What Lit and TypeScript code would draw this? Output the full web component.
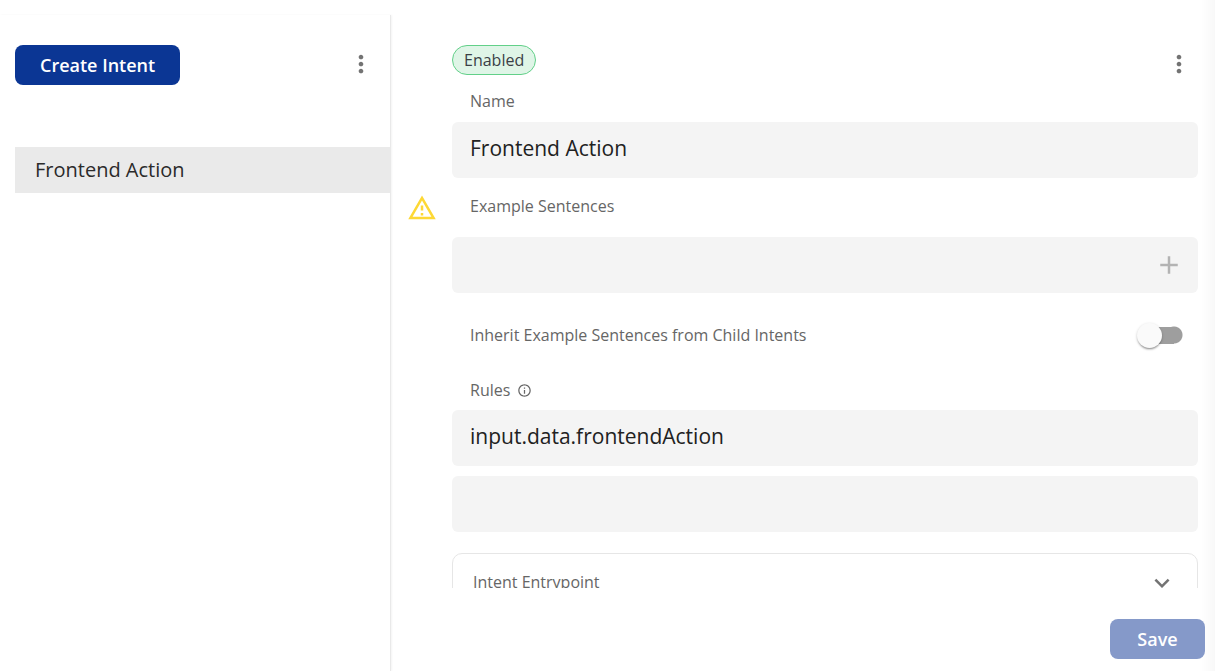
import { LitElement, html, css, svg } from "lit";
import { customElement, property, state } from "lit/decorators.js";

const dots = svg`<path fill="currentColor" d="M12 8c1.1 0 2-.9 2-2s-.9-2-2-2-2 .9-2 2 .9 2 2 2zm0 2c-1.1 0-2 .9-2 2s.9 2 2 2 2-.9 2-2-.9-2-2-2zm0 6c-1.1 0-2 .9-2 2s.9 2 2 2 2-.9 2-2-.9-2-2-2z"/>`;
const plus = svg`<path fill="currentColor" d="M19 13h-6v6h-2v-6H5v-2h6V5h2v6h6v2z"/>`;
const warning = svg`<path fill="currentColor" d="M12 5.99L19.53 19H4.47L12 5.99M12 2L1 21h22L12 2zm1 14h-2v2h2v-2zm0-6h-2v4h2v-4z"/>`;
const info = svg`<path fill="currentColor" d="M11 7h2v2h-2zm0 4h2v6h-2zm1-9C6.48 2 2 6.48 2 12s4.48 10 10 10 10-4.48 10-10S17.52 2 12 2zm0 18c-4.41 0-8-3.59-8-8s3.59-8 8-8 8 3.59 8 8-3.59 8-8 8z"/>`;
const chevron = svg`<path fill="currentColor" d="M7.41 8.59L12 13.17l4.59-4.58L18 10l-6 6-6-6 1.41-1.41z"/>`;

const icon = (shape: unknown, size: number) =>
  html`<svg viewBox="0 0 24 24" width=${size} height=${size} aria-hidden="true">${shape}</svg>`;

const controls = css`
  *, *::before { box-sizing: border-box; }
  svg { display: block; }
  button { font: inherit; border: 0; background: none; padding: 0; cursor: pointer; }
  .icon-button { display: grid; place-items: center; width: 38px; height: 38px; color: #737373; }
  .primary {
    height: 40px;
    min-width: 95px;
    border-radius: 8px;
    background: #0b3694;
    color: #fff;
    font-size: 18px;
    line-height: 24px;
    font-weight: 600;
    padding: 0 25px;
  }
  .primary:disabled { background: #8599c9; color: #fff; cursor: default; }
`;

@customElement("intent-list")
export class IntentList extends LitElement {
  @property({ attribute: false }) intents: string[] = [];

  static styles = [controls, css`
    :host { display: block; padding: 30px 0 0 15px; border-right: 1px solid #e9e9e9; box-shadow: 1px 0 2px #f4f4f4; }
    .bar { display: flex; justify-content: space-between; padding-right: 10px; margin-bottom: 62px; }
    .list { list-style: none; margin: 0; padding: 0; }
    .item {
      display: block;
      padding: 10px 20px;
      background: #eaeaea;
      color: #2b2b2b;
      font-size: 20px;
      line-height: 26px;
      text-decoration: none;
    }
  `];

  render() {
    return html`
      <div class="bar">
        <button class="primary">Create Intent</button>
        <button class="icon-button" aria-label="Intent list options">${icon(dots, 28)}</button>
      </div>
      <ul class="list">
        ${this.intents.map((name) => html`<li><a class="item" href="#intent">${name}</a></li>`)}
      </ul>
    `;
  }
}

@customElement("intent-editor")
export class IntentEditor extends LitElement {
  @state() private inherit = false;

  static styles = [controls, css`
    :host { display: flex; flex-direction: column; min-width: 0; min-height: 0; }
    .scroll { flex: 1; min-height: 0; overflow-y: auto; scrollbar-width: none; }
    .form {
      display: grid;
      grid-template-columns: 61px minmax(0, 1fr);
      padding: 30px 17px 20px 0;
    }
    .form > * { grid-column: 2; }
    .top { display: flex; justify-content: space-between; height: 30px; }
    .chip {
      height: 30px;
      padding: 0 11px;
      border: 1px solid #62d089;
      border-radius: 15px;
      background: #dff5e7;
      color: #3b3f46;
      font-size: 16px;
      line-height: 28px;
    }
    .label {
      display: flex;
      align-items: center;
      gap: 7px;
      padding-left: 18px;
      color: #666;
      font-size: 16px;
      line-height: 20px;
    }
    .name { padding-top: 16px; padding-bottom: 11px; }
    .examples { padding-top: 18px; padding-bottom: 21px; }
    .rules { padding-top: 32px; padding-bottom: 10px; }
    .form > .warn { grid-column: 1; place-self: center; color: #fdd835; }
    .field {
      display: flex;
      align-items: center;
      height: 56px;
      border-radius: 6px;
      background: #f4f4f4;
    }
    .field + .field { margin-top: 10px; }
    .input {
      flex: 1;
      min-width: 0;
      height: 56px;
      padding: 0 18px 5px;
      border: 0;
      outline: 0;
      background: none;
      color: #212121;
      font: inherit;
      font-size: 21px;
    }
    .add { color: #b3b3b3; margin-right: 10px; }
    .inherit {
      display: flex;
      justify-content: space-between;
      align-items: center;
      height: 26px;
      margin-top: 29px;
      padding-right: 15px;
    }
    .switch {
      appearance: none;
      display: flex;
      align-items: center;
      width: 46px;
      height: 26px;
      margin: 0;
      background: linear-gradient(#9e9e9e, #9e9e9e) 12px 5px / 25px 17px no-repeat,
        radial-gradient(circle at 37px 13px, #9e9e9e 8px, transparent 9px);
      cursor: pointer;
    }
    .switch::before {
      content: "";
      width: 25px;
      height: 25px;
      border-radius: 50%;
      background: #fafafa;
      box-shadow: 0 2px 2px -1px #0005, 0 1px 3px #0003;
    }
    .switch:checked { justify-content: flex-end; }
    .panel {
      display: flex;
      align-items: center;
      justify-content: space-between;
      height: 58px;
      margin-top: 21px;
      padding: 0 20px;
      border: 1px solid #e6e6e6;
      border-radius: 10px;
      color: #666;
      font-size: 16px;
    }
    .panel svg { margin-top: 2px; color: #737373; }
    .footer { display: flex; justify-content: flex-end; padding: 31px 10px 12px; }
  `];

  render() {
    return html`
      <div class="scroll">
        <form class="form" @submit=${(e: Event) => e.preventDefault()}>
          <div class="top">
            <span class="chip">Enabled</span>
            <button type="button" class="icon-button" aria-label="Intent options">${icon(dots, 28)}</button>
          </div>
          <label class="label name" for="name">Name</label>
          <div class="field"><input class="input" id="name" .value=${"Frontend Action"} /></div>
          <span class="warn">${icon(warning, 30)}</span>
          <label class="label examples" for="example">Example Sentences</label>
          <div class="field">
            <input class="input" id="example" />
            <button type="button" class="icon-button add" aria-label="Add sentence">${icon(plus, 30)}</button>
          </div>
          <div class="inherit">
            <label class="label" for="inherit">Inherit Example Sentences from Child Intents</label>
            <input class="switch" id="inherit" type="checkbox" role="switch" .checked=${this.inherit}
              @change=${(e: Event) => { this.inherit = (e.target as HTMLInputElement).checked; }} />
          </div>
          <label class="label rules" for="rule">Rules ${icon(info, 15)}</label>
          <div class="field"><input class="input" id="rule" .value=${"input.data.frontendAction"} /></div>
          <div class="field"><input class="input" aria-label="New rule" /></div>
          <button type="button" class="panel" aria-expanded="false">
            <span>Intent Entrypoint</span>${icon(chevron, 30)}
          </button>
        </form>
      </div>
      <div class="footer"><button class="primary" disabled>Save</button></div>
    `;
  }
}

@customElement("app-root")
export class AppRoot extends LitElement {
  static styles = css`
    :host {
      box-sizing: border-box;
      display: grid;
      grid-template-columns: 391px minmax(0, 1fr);
      grid-template-rows: minmax(0, 1fr);
      height: 100vh;
      padding-top: 15px;
      background: linear-gradient(to left, #f8f8f8, #fff 14px);
      font-family: "Open Sans", "Noto Sans", sans-serif;
    }
  `;

  render() {
    return html`
      <intent-list .intents=${["Frontend Action"]}></intent-list>
      <intent-editor></intent-editor>
    `;
  }
}
